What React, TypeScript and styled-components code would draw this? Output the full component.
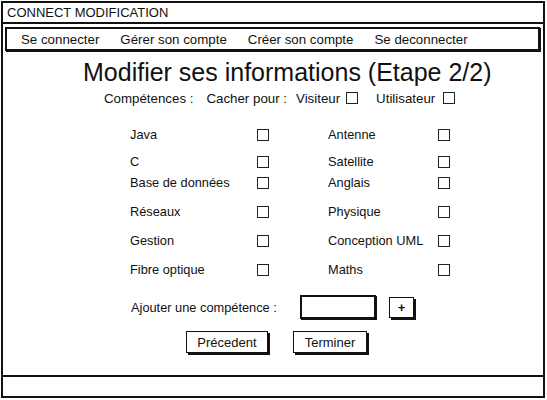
import React from 'react'
import styled, { createGlobalStyle } from 'styled-components'

const GlobalStyle = createGlobalStyle`
  html, body {
    margin: 0;
    padding: 0;
    background: #ffffff;
  }
  body {
    font-family: 'Liberation Sans', Arial, sans-serif;
    color: #111;
  }
`

const Page = styled.div`
  width: 547px;
  height: 400px;
  padding: 1px 0 0 1px;
  box-sizing: border-box;
`

const Frame = styled.div`
  width: 544px;
  height: 397px;
  box-sizing: border-box;
  border: 2px solid #111;
  display: flex;
  flex-direction: column;
`

const TitleBar = styled.div`
  height: 21px;
  flex: none;
  box-sizing: border-box;
  border-bottom: 2px solid #111;
  padding-left: 4px;
  font-size: 13px;
  line-height: 19px;
`

const NavBar = styled.div`
  margin: 3px 3px 0 2px;
  height: 24px;
  flex: none;
  box-sizing: border-box;
  border: 2px solid #111;
  box-shadow: 1px 1px 0 #111;
  display: flex;
  align-items: center;
  padding-left: 14px;
  gap: 21px;
  font-size: 13.3px;
`

const NavItem = styled.span`
  white-space: nowrap;
`

const Content = styled.div`
  flex: 1;
  display: flex;
  flex-direction: column;
`

const Heading = styled.h1`
  margin: 7px 0 0 80px;
  font-size: 25px;
  font-weight: normal;
  line-height: 29px;
  white-space: nowrap;
`

const HideRow = styled.div`
  margin: 3px 0 0 101px;
  display: flex;
  align-items: center;
  font-size: 13.3px;
  height: 16px;
`

const HideLabel = styled.span<{ $gap: number }>`
  margin-right: ${p => p.$gap}px;
  white-space: nowrap;
`

const Box = styled.span<{ $gap?: number }>`
  display: inline-block;
  width: 10px;
  height: 10px;
  border: 1px solid #222;
  border-right-width: 1.5px;
  border-bottom-width: 1.5px;
  margin-right: ${p => p.$gap ?? 0}px;
  flex: none;
`

const Grid = styled.div`
  margin: 0 0 0 127px;
  display: flex;
  flex-direction: column;
`

const SkillRow = styled.div<{ $top: number }>`
  margin-top: ${p => p.$top}px;
  height: 12px;
  display: flex;
  align-items: center;
  font-size: 12.8px;
`

const SkillLabel = styled.span<{ $w: number }>`
  width: ${p => p.$w}px;
  white-space: nowrap;
  position: relative;
  top: -1px;
`

const Spacer = styled.span<{ $w: number }>`
  width: ${p => p.$w}px;
  flex: none;
`

const AddRow = styled.div`
  margin: 19px 0 0 128px;
  display: flex;
  align-items: center;
  font-size: 12.8px;
`

const AddLabel = styled.span`
  width: 169px;
  white-space: nowrap;
`

const Input = styled.div`
  width: 76px;
  height: 24px;
  box-sizing: border-box;
  border: 2px solid #111;
  box-shadow: 1px 1px 0 #111;
  margin-right: 13px;
`

const PlusButton = styled.div`
  width: 25px;
  height: 21px;
  box-sizing: border-box;
  border: 1.5px solid #111;
  box-shadow: 2px 2px 0 #111;
  display: flex;
  align-items: center;
  justify-content: center;
  font-size: 13px;
  font-weight: bold;
`

const Actions = styled.div`
  margin: 12px 0 0 183px;
  display: flex;
  gap: 25px;
`

const ActionButton = styled.div<{ $w: number }>`
  width: ${p => p.$w}px;
  height: 22px;
  box-sizing: border-box;
  border: 1.5px solid #111;
  box-shadow: 2px 2px 0 #111;
  display: flex;
  align-items: center;
  justify-content: center;
  font-size: 13px;
`

const Footer = styled.div`
  height: 21px;
  flex: none;
  margin-top: auto;
  box-sizing: border-box;
  border-top: 2px solid #111;
`

const skills: [string, string, number][] = [
  ['Java', 'Antenne', 23],
  ['C', 'Satellite', 15],
  ['Base de données', 'Anglais', 9],
  ['Réseaux', 'Physique', 17],
  ['Gestion', 'Conception UML', 17],
  ['Fibre optique', 'Maths', 17],
]

const App: React.FC = () => {
  return (
    <>
      <GlobalStyle />
      <Page>
        <Frame>
          <TitleBar>CONNECT MODIFICATION</TitleBar>
          <NavBar>
            <NavItem>Se connecter</NavItem>
            <NavItem>Gérer son compte</NavItem>
            <NavItem>Créer son compte</NavItem>
            <NavItem>Se deconnecter</NavItem>
          </NavBar>
          <Content>
            <Heading>Modifier ses informations (Etape 2/2)</Heading>
            <HideRow>
              <HideLabel $gap={13}>Compétences :</HideLabel>
              <HideLabel $gap={9}>Cacher pour :</HideLabel>
              <HideLabel $gap={6}>Visiteur</HideLabel>
              <Box $gap={18} />
              <HideLabel $gap={8}>Utilisateur</HideLabel>
              <Box />
            </HideRow>
            <Grid>
              {skills.map(([left, right, top]) => (
                <SkillRow key={left} $top={top}>
                  <SkillLabel $w={127}>{left}</SkillLabel>
                  <Box />
                  <Spacer $w={59} />
                  <SkillLabel $w={110}>{right}</SkillLabel>
                  <Box />
                </SkillRow>
              ))}
            </Grid>
            <AddRow>
              <AddLabel>Ajouter une compétence :</AddLabel>
              <Input />
              <PlusButton>+</PlusButton>
            </AddRow>
            <Actions>
              <ActionButton $w={82}>Précedent</ActionButton>
              <ActionButton $w={74}>Terminer</ActionButton>
            </Actions>
          </Content>
          <Footer />
        </Frame>
      </Page>
    </>
  )
}

export default App
